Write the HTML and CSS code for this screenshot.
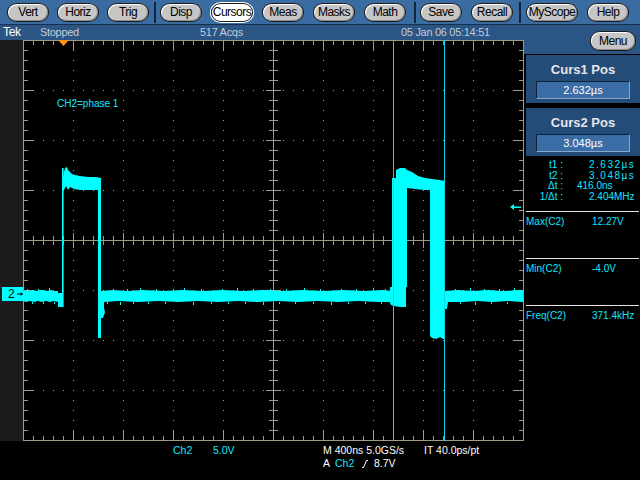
FILE: index.html
```html
<!DOCTYPE html>
<html>
<head>
<meta charset="utf-8">
<link rel="stylesheet" href="styles.css">
</head>
<body>
<div class="toolbar">
  <div class="group g1">
    <span class="btn">Vert</span><span class="btn">Horiz</span><span class="btn">Trig</span>
  </div>
  <span class="sep s1"></span>
  <div class="group">
    <span class="btn">Disp</span><span class="btn on">Cursors</span><span class="btn">Meas</span><span class="btn">Masks</span><span class="btn">Math</span>
  </div>
  <span class="sep s2"></span>
  <div class="group">
    <span class="btn">Save</span><span class="btn">Recall</span>
  </div>
  <span class="sep s3"></span>
  <div class="group">
    <span class="btn wide">MyScope</span><span class="btn">Help</span>
  </div>
</div>
<div class="status">
  <span class="tek">Tek</span><span class="stopped">Stopped</span><span class="acqs">517 Acqs</span><span class="date">05 Jan 06 05:14:51</span>
</div>
<div class="main">
  <div class="strip">
    <div class="chmark"><span>2</span><svg width="7" height="6" viewBox="0 0 7 6"><path d="M0 2.5H4V1L7 3L4 5V3.5H0Z" fill="#000"/></svg></div>
  </div>
  <svg class="scope" width="501" height="401" viewBox="0 0 501 401">
    <g fill="none" stroke="#a0a0a0" stroke-width="1" stroke-dasharray="1 9" shape-rendering="crispEdges">
      <path d="M50.5 10V400M100.5 10V400M150.5 10V400M200.5 10V400M300.5 10V400M350.5 10V400M400.5 10V400M450.5 10V400"/>
      <path d="M10 50.5H500M10 100.5H500M10 150.5H500M10 250.5H500M10 300.5H500M10 350.5H500"/>
    </g>
    <g fill="none" stroke="#a39a86" shape-rendering="crispEdges">
      <rect x="0.5" y="0.5" width="500" height="400"/>
      <path d="M0 200.5H501M250.5 0V401"/>
      <g stroke-dasharray="1 9">
        <path d="M10 2.5H500" stroke-width="5"/>
        <path d="M10 398.5H500" stroke-width="5"/>
        <path d="M2.5 10V400" stroke-width="5"/>
        <path d="M498.5 10V400" stroke-width="5"/>
        <path d="M10 200.5H500" stroke-width="9"/>
        <path d="M250.5 10V400" stroke-width="9"/>
      </g>
      <g stroke-dasharray="1 49">
        <path d="M50 5H500" stroke-width="10"/>
        <path d="M50 396H500" stroke-width="10"/>
        <path d="M5 50V400" stroke-width="10"/>
        <path d="M496 50V400" stroke-width="10"/>
        <path d="M50 200.5H500" stroke-width="15"/>
        <path d="M250.5 50V400" stroke-width="15"/>
      </g>
    </g>
    <polygon points="35,0 46,0 40.5,6" fill="#ff9018"/>
    <text x="34" y="67" class="label">CH2=phase 1</text>
    <g fill="#00ffff">
      <polygon points="0,251 4,250 7,251 10,250 14,251 17,250 21,250 24,251 28,250 31,251 35,251 35,253 39,253 39,267 35,267 35,262 31,261 27,262 23,261 19,262 15,261 11,262 7,261 3,262 0,261"/>
      <rect x="39" y="128" width="1.6" height="139"/>
      <polygon points="40,150 40,138 41,132 42,128 44,127 45,130 47,132 49,134 52,135 57,136 65,137 73,137 78,138 78,298 75,298 75,150 67,150 57,150 51,149 47,147 45,150 43,146 41,150"/>
      <polygon points="78,255 81,255 81,268 82,272 80,278 78,278"/>
      <polygon points="78,251 90,250 104,251 120,250 140,251 160,250 180,251 200,250 220,251 240,250 260,251 280,250 300,251 320,250 340,251 360,250 369,251 369,262 355,262 335,261 315,262 295,261 275,262 255,261 235,262 215,261 195,262 175,261 155,262 135,261 115,262 95,261 82,262 78,262"/>
      <polygon points="367,247 369,247 369,138 373,138 373,130 377,128 382,128 384,130 389,132 395,136 402,138 409,139 417,140 422,141 422,298 420,299 417,297 413,299 409,298 407,296 407,150 402,150 392,149 384,148 384,247 383,247 383,267 377,267 371,266 368,265 367,263"/>
      <polygon points="422,251 435,250 450,251 465,250 480,251 500,250 500,262 485,261 470,262 455,261 440,262 425,262 424,269 422,269"/>
    </g>
    <path stroke="#00ffff" stroke-width="1" d="M90.5 249v2M104.5 249v2M117.5 248v3M133.5 249v2M150.5 249v2M161.5 248v3M178.5 249v2M199.5 249v2M214.5 248v3M230.5 249v2M247.5 249v2M263.5 249v2M281.5 248v3M297.5 249v2M318.5 249v2M333.5 249v2M350.5 248v3M362.5 249v2M84.5 262v2M97.5 262v3M110.5 262v2M125.5 262v2M142.5 262v2M170.5 262v3M188.5 262v2M205.5 262v2M222.5 262v2M240.5 262v3M256.5 262v2M272.5 262v2M290.5 262v2M308.5 262v3M325.5 262v2M342.5 262v2M358.5 262v2M432.5 249v2M447.5 248v3M461.5 249v2M476.5 249v2M491.5 248v3M437.5 262v2M452.5 262v3M468.5 262v2M484.5 262v2M4.5 249v2M15.5 249v2M26.5 248v3M9.5 262v2M20.5 262v2M31.5 262v2"/>
    <g fill="#12d2ea">
      <rect x="370" y="0" width="1" height="401"/>
      <rect x="421" y="0" width="1" height="401"/>
    </g>
    <g fill="#00ffff">
      <polygon points="487,167 491,164 491,170"/>
      <rect x="490" y="166.5" width="8" height="1.5"/>
    </g>
  </svg>
  <div class="panel">
    <div class="panel-head"><span class="btn menu">Menu</span></div>
    <div class="cbox">
      <div class="ctitle">Curs1 Pos</div>
      <div class="cfield">2.632µs</div>
    </div>
    <div class="cbox">
      <div class="ctitle">Curs2 Pos</div>
      <div class="cfield">3.048µs</div>
    </div>
    <div class="readout">
      <span class="lbl">t1 :</span><span class="val spaced">2.632µs</span>
      <span class="lbl">t2 :</span><span class="val spaced">3.048µs</span>
      <span class="lbl">Δt :</span><span class="val shift">416.0ns</span>
      <span class="lbl">1/Δt :</span><span class="val">2.404MHz</span>
    </div>
    <div class="meas">
      <div class="msec"><div class="rule"></div><div class="mrow"><span class="mname">Max(C2)</span><span>12.27V</span></div></div>
      <div class="msec"><div class="rule"></div><div class="mrow"><span class="mname">Min(C2)</span><span>-4.0V</span></div></div>
      <div class="msec"><div class="rule"></div><div class="mrow"><span class="mname">Freq(C2)</span><span>371.4kHz</span></div></div>
    </div>
  </div>
</div>
<div class="bottom">
  <div class="chinfo"><span class="ch">Ch2</span><span>5.0V</span></div>
  <div class="tb">
    <span>M 400ns 5.0GS/s</span><span>IT 40.0ps/pt</span>
    <span class="trig"><span class="a">A</span><span class="tch">Ch2</span><svg class="slope" width="6" height="10" viewBox="0 0 6 10"><path d="M0 8.5H1.5L4.5 1.5H6" fill="none" stroke="#fff" stroke-width="1"/></svg><span>8.7V</span></span>
  </div>
</div>
</body>
</html>
```

FILE: styles.css
```css
* { box-sizing: border-box; }
html, body { margin: 0; padding: 0; background: #000; }
body {
  width: 640px;
  height: 480px;
  overflow: hidden;
  font-family: "Liberation Sans", Arial, sans-serif;
}

/* toolbar */
.toolbar {
  height: 25px;
  background: #3a6ca2;
  border-bottom: 1px solid #17304f;
  display: flex;
  align-items: flex-start;
  padding: 3px 0 0 7px;
}
.group { display: flex; gap: 9px; }
.group.g1 { gap: 8px; }
.btn {
  display: block;
  width: 42px;
  height: 19px;
  border: 1px solid #1a1a1a;
  border-radius: 10px / 9px;
  background: #c6c6c6;
  box-shadow: inset 1px 1px 0 #fff, inset -1px -1px 0 #8a8a8a;
  font: 12px/17px "Liberation Sans", sans-serif;
  letter-spacing: -0.5px;
  color: #000;
  text-align: center;
  white-space: nowrap;
}
.btn.wide { width: 52px; }
.btn.on { background: #fff; box-shadow: 0 0 0 1px #fff; }
.sep { width: 2px; height: 21px; margin-top: -1px; background: #10243e; }
.sep.s1 { margin-left: 5px; margin-right: 4px; }
.sep.s2 { margin-left: 8px; margin-right: 4px; }
.sep.s3 { margin-left: 6px; margin-right: 5px; }

/* status bar */
.status {
  height: 15px;
  background: #2a5585;
  display: flex;
  font: 11px/15px "Liberation Sans", sans-serif;
  letter-spacing: -0.3px;
  color: #c4ccd6;
  white-space: nowrap;
}
.tek { color: #fff; margin-left: 3px; width: 37px; font-size: 12px; }
.stopped { width: 160px; }
.acqs { width: 201px; }

/* main area */
.main { display: flex; height: 401px; }
.strip { width: 23px; background: #1c1c1c; padding-top: 247px; }
.chmark {
  margin-left: 2px;
  width: 21px;
  height: 14px;
  background: #00ffff;
  display: flex;
  align-items: center;
  padding-left: 6px;
  gap: 2px;
  font: 12px/14px "Liberation Sans", sans-serif;
  color: #000;
}
.scope { display: block; width: 501px; height: 401px; flex: none; }
.label { font: 10px "Liberation Sans", sans-serif; fill: #10e6ff; }

/* right panel */
.panel {
  width: 116px;
  position: relative;
  font: 10px "Liberation Sans", sans-serif;
  color: #10e6ff;
}
.panel-head { height: 14px; background: #2a5585; margin-bottom: 1px; }
.menu { position: absolute; top: -9px; left: 66px; width: 46px; height: 20px; line-height: 18px; }
.cbox {
  margin-left: 2px;
  height: 48px;
  background: #234c79;
  padding-top: 7px;
  text-align: center;
}
.cbox + .cbox { margin-top: 5px; }
.ctitle { font: bold 13px/15px "Liberation Sans", sans-serif; color: #e6e6e6; }
.cfield {
  margin: 4px 0 0 10px;
  width: 94px;
  height: 18px;
  background: #3a6ca6;
  border: 1px solid;
  border-color: #0e2238 #86a8cc #86a8cc #0e2238;
  font: 11px/16px "Liberation Sans", sans-serif;
  color: #fff;
}
.readout {
  margin-top: 4px;
  display: grid;
  grid-template-columns: 39px auto;
  column-gap: 26px;
  line-height: 10.7px;
  white-space: nowrap;
}
.readout .lbl { text-align: right; }
.readout .spaced { letter-spacing: 1.5px; }
.readout .shift { margin-left: -12px; }
.meas { margin-top: 8px; }
.msec { height: 47px; }
.rule { height: 1px; background: #e4e4e4; margin: 0 1px 0 2px; }
.mrow { display: flex; margin-top: 4px; line-height: 11px; padding-left: 2px; white-space: nowrap; }
.mname { width: 66px; }

/* bottom info */
.bottom {
  height: 39px;
  display: flex;
  align-items: flex-start;
  padding: 3px 0 0 173px;
  font: 10.5px/13px "Liberation Sans", sans-serif;
  color: #fff;
  white-space: nowrap;
}
.chinfo { width: 150px; display: flex; color: #10e6ff; }
.chinfo .ch { width: 40px; }
.tb { display: grid; grid-template-columns: 101px auto; align-content: start; }
.trig { display: flex; align-items: center; height: 13px; }
.trig .a { width: 12px; }
.trig .tch { width: 27px; color: #10e6ff; }
.slope { display: block; margin-right: 6px; }
```
